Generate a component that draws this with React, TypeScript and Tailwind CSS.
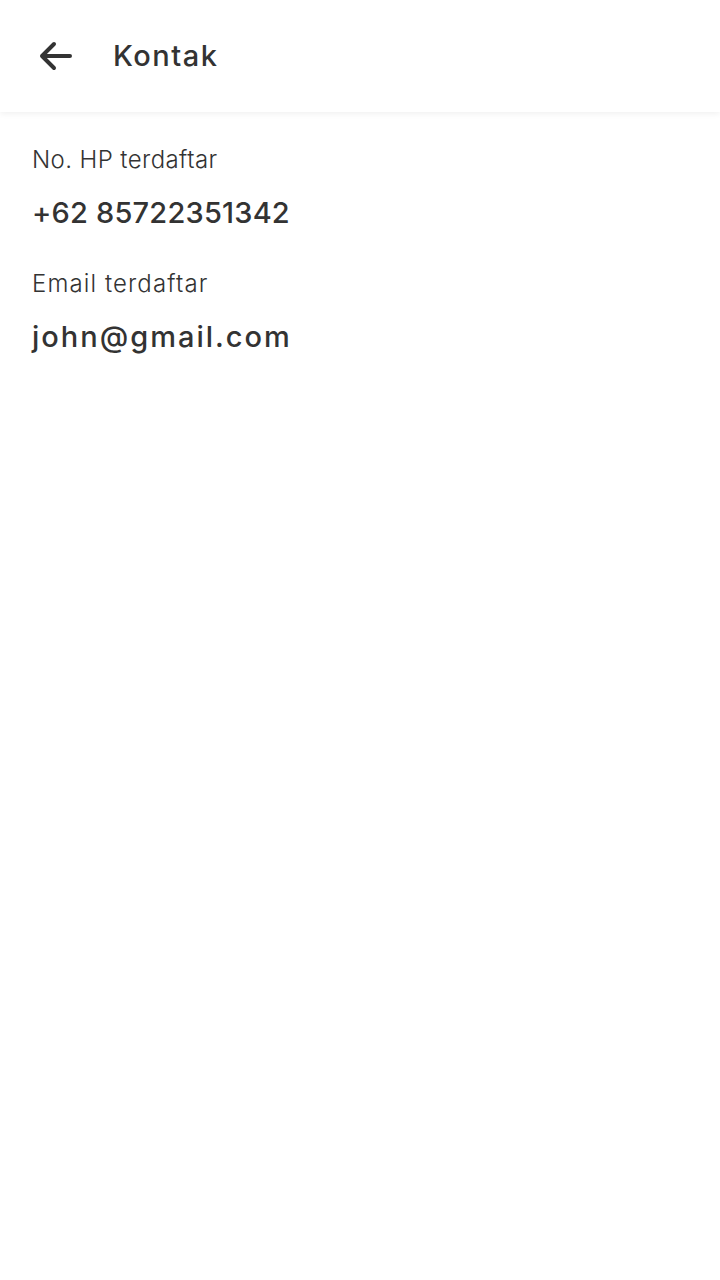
const contacts = [
  {
    label: "No. HP terdaftar",
    value: "+62 85722351342",
    labelTracking: "tracking-[0.4px]",
    valueTracking: "tracking-[0.2px]",
  },
  {
    label: "Email terdaftar",
    value: "john@gmail.com",
    labelTracking: "tracking-[1.1px]",
    valueTracking: "tracking-[2px]",
  },
];

export default function App() {
  return (
    <div
      className="min-h-[1280px] w-[720px] bg-white text-[#333333]"
      style={{ fontFamily: "Inter, 'Noto Sans', sans-serif" }}
    >
      <header className="flex h-[112px] items-center bg-white shadow-[0_2px_6px_rgba(0,0,0,0.06)]">
        <button className="ml-[36px] flex h-10 w-10 items-center justify-center">
          <svg width="40" height="40" viewBox="0 0 40 40" fill="none">
            <path
              d="M34 20H6M18 8L6 20L18 32"
              stroke="#333333"
              strokeWidth="4"
              strokeLinecap="round"
              strokeLinejoin="round"
            />
          </svg>
        </button>
        <h1 className="ml-[37px] text-[29px] font-medium tracking-[1.5px]">Kontak</h1>
      </header>
      <main className="px-8 pt-[30px]">
        {contacts.map((c) => (
          <div key={c.label} className="mb-[35px]">
            <p className={`text-[24px] font-light leading-[36px] ${c.labelTracking}`}>{c.label}</p>
            <p className={`mt-[17px] text-[29px] font-medium leading-[36px] ${c.valueTracking}`}>
              {c.value}
            </p>
          </div>
        ))}
      </main>
    </div>
  );
}
